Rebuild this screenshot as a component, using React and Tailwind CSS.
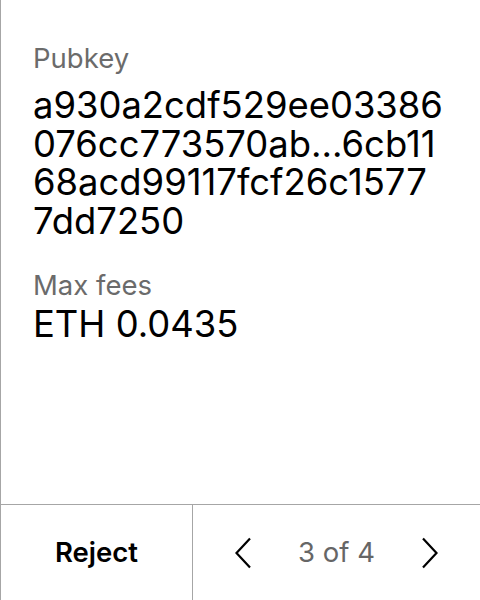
import React from "react";

function Chevron({ dir }) {
  return (
    <svg width="16" height="32" viewBox="0 0 16 32" fill="none">
      {dir === "left" ? (
        <path d="M15 1.5 L1.5 16 L15 30.5" stroke="#000" strokeWidth="2.2" />
      ) : (
        <path d="M1 1.5 L14.5 16 L1 30.5" stroke="#000" strokeWidth="2.2" />
      )}
    </svg>
  );
}

export default function App() {
  const font = { fontFamily: "Inter, 'Noto Sans', sans-serif" };
  return (
    <div
      className="w-[480px] h-[600px] bg-white flex flex-col border-l border-[#a6a6a6] text-black"
      style={font}
    >
      <div className="flex-1 flex flex-col pl-8 pt-[40px]">
        <div className="text-[27.5px] leading-[36px] text-[#6b6b6b]">Pubkey</div>
        <div className="text-[36.4px] leading-[38.7px] mt-[10px]">
          <div>a930a2cdf529ee03386</div>
          <div>076cc773570ab...6cb11</div>
          <div>68acd99117fcf26c1577</div>
          <div>7dd7250</div>
        </div>
        <div className="text-[27.5px] leading-[36px] text-[#6b6b6b] mt-[26px]">Max fees</div>
        <div className="text-[36.4px] leading-[38.7px] mt-[2px]">ETH 0.0435</div>
      </div>
      <div className="h-[96px] border-t border-[#a6a6a6] flex">
        <div className="w-[192px] border-r border-[#a6a6a6] flex items-center justify-center">
          <span className="text-[27.5px] font-semibold">Reject</span>
        </div>
        <div className="flex-1 flex items-center">
          <div className="w-[100px] flex items-center justify-center">
            <Chevron dir="left" />
          </div>
          <div className="flex-1 text-center text-[27.5px] text-[#666666]">3 of 4</div>
          <div className="w-[100px] flex items-center justify-center">
            <Chevron dir="right" />
          </div>
        </div>
      </div>
    </div>
  );
}
